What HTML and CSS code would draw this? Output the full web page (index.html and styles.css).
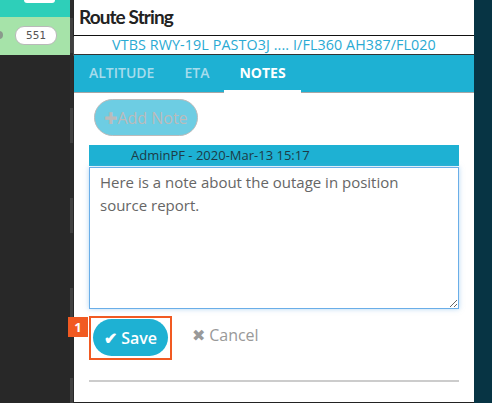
FILE: index.html
```html
<!DOCTYPE html>
<html lang="en">
<head>
  <meta charset="UTF-8">
  <title>Route String - Notes</title>
  <link rel="stylesheet" href="styles.css">
</head>
<body>

  <div class="sidebar">
    <div class="sidebar-list">
      <div class="side-top"><span class="side-pill-top"></span></div>
      <div class="side-row">
        <span class="side-dot"></span>
        <span class="count-pill">551</span>
      </div>
    </div>
    <div class="side-scroll"></div>
  </div>

  <div class="panel">
    <h1 class="panel-title">Route String</h1>
    <div class="route">VTBS RWY-19L PASTO3J .... I/FL360 AH387/FL020</div>

    <div class="tabs">
      <span class="tab">ALTITUDE</span>
      <span class="tab">ETA</span>
      <span class="tab active">NOTES</span>
    </div>

    <div class="notes">
      <button class="btn-add" disabled>&#10010;Add Note</button>

      <div class="note-head">AdminPF - 2020-Mar-13 15:17</div>
      <textarea class="note-text">Here is a note about the outage in position source report.</textarea>

      <div class="actions">
        <div class="save-wrap">
          <span class="step-badge">1</span>
          <button class="btn-save">&#10004; Save</button>
        </div>
        <button class="btn-cancel">&#10006; Cancel</button>
      </div>

      <hr class="divider">
    </div>
  </div>

  <div class="edge"></div>

</body>
</html>
```

FILE: styles.css
```css
body {
  display: flex;
  margin: 0;
  height: 403px;
  overflow: hidden;
  background: #282828;
  font-family: 'Open Sans', 'Noto Sans', sans-serif;
}

/* left list */
.sidebar {
  display: flex;
  width: 74px;
  flex-shrink: 0;
}

.sidebar-list {
  width: 70px;
}

.side-top {
  height: 17px;
  background: #2ecfb9;
}

.side-pill-top {
  display: block;
  margin-left: 24px;
  width: 31px;
  height: 3px;
  background: #fff;
  border-radius: 0 0 6px 6px;
}

.side-row {
  display: flex;
  align-items: center;
  gap: 12px;
  height: 38px;
  padding-bottom: 2px;
  box-sizing: border-box;
  background: #a6e3a9;
  overflow: hidden;
}

.side-dot {
  width: 8px;
  height: 8px;
  margin-left: -5px;
  border-radius: 50%;
  background: #8a9a8c;
}

.count-pill {
  width: 40px;
  height: 17px;
  line-height: 17px;
  text-align: center;
  background: #fff;
  border: 1px solid #b9b9b9;
  border-radius: 9px;
  font-family: 'DejaVu Sans Mono', monospace;
  font-size: 11px;
  color: #555;
}

.side-scroll {
  width: 3px;
  background: repeating-linear-gradient(to bottom,
    #2c2c2c 0, #2c2c2c 18px,
    #404040 18px, #404040 53px,
    #2c2c2c 53px, #2c2c2c 90px);
}

/* main panel */
.panel {
  width: 400px;
  flex-shrink: 0;
  background: #fff;
  border-bottom: 1px solid #222;
  box-sizing: border-box;
}

.panel-title {
  margin: 0;
  padding: 5px 5px 0;
  height: 36px;
  box-sizing: border-box;
  font-family: 'Lato', sans-serif;
  font-size: 19px;
  font-weight: bold;
  letter-spacing: -0.9px;
  color: #222;
  border-bottom: 1px solid #111;
}

.route {
  height: 18px;
  line-height: 18px;
  text-align: center;
  font-size: 14.3px;
  letter-spacing: 0.1px;
  color: #2aaad3;
  border-bottom: 1px solid #333;
  box-shadow: 0 1px 1px #ccc;
}

.tabs {
  display: flex;
  height: 38px;
  padding-left: 15px;
  background: #1eb1d3;
  box-sizing: border-box;
  border-bottom: 1px solid #a6a6a6;
}

.tab {
  padding: 0 15px;
  line-height: 36px;
  font-size: 14px;
  font-weight: 600;
  color: #a6dcec;
}

.tab:first-child {
  padding-left: 0;
}

.tab.active {
  color: #fff;
  font-weight: bold;
  border-bottom: 3px solid #fff;
  margin-bottom: -1px;
}

/* notes */
.notes {
  padding: 6px 15px 0;
}

.btn-add {
  display: block;
  margin-left: 5px;
  width: 104px;
  height: 37px;
  padding: 0;
  background: #6dcde3;
  border: 1px solid #bbb;
  border-radius: 19px;
  font-family: inherit;
  font-size: 16px;
  color: #bbb;
}

.note-head {
  margin-top: 9px;
  height: 21px;
  line-height: 21px;
  padding-left: 42px;
  background: #1eb1d3;
  font-size: 13px;
  color: #1d3b46;
}

.note-text {
  display: block;
  width: 100%;
  height: 142px;
  margin-top: 1px;
  padding: 3px 10px;
  box-sizing: border-box;
  border: 1px solid #6aaee8;
  box-shadow: 0 0 5px rgba(106, 174, 232, 0.5);
  font-family: inherit;
  font-size: 15px;
  line-height: 23px;
  color: #666;
  resize: vertical;
}

.actions {
  display: flex;
  align-items: center;
  gap: 20px;
  margin-top: 7px;
}

.save-wrap {
  position: relative;
  padding: 1px 2px 2px;
  border: 2px solid #f15a22;
}

.step-badge {
  position: absolute;
  left: -23px;
  top: -1px;
  width: 20px;
  height: 20px;
  line-height: 20px;
  text-align: center;
  background: #f15a22;
  color: #fff;
  font-size: 13px;
  font-weight: bold;
}

.btn-save {
  display: block;
  width: 75px;
  height: 37px;
  padding: 0;
  background: #1eb1d3;
  border: none;
  border-radius: 19px;
  font-family: inherit;
  font-size: 16px;
  font-weight: 600;
  color: #fff;
}

.btn-cancel {
  padding: 0 0 6px;
  background: none;
  border: none;
  font-family: inherit;
  font-size: 16px;
  color: #999;
}

.divider {
  margin: 20px 0 0;
  border: none;
  border-top: 2px solid #ccc;
}

.edge {
  flex: 1;
  background: #073444;
}
```
